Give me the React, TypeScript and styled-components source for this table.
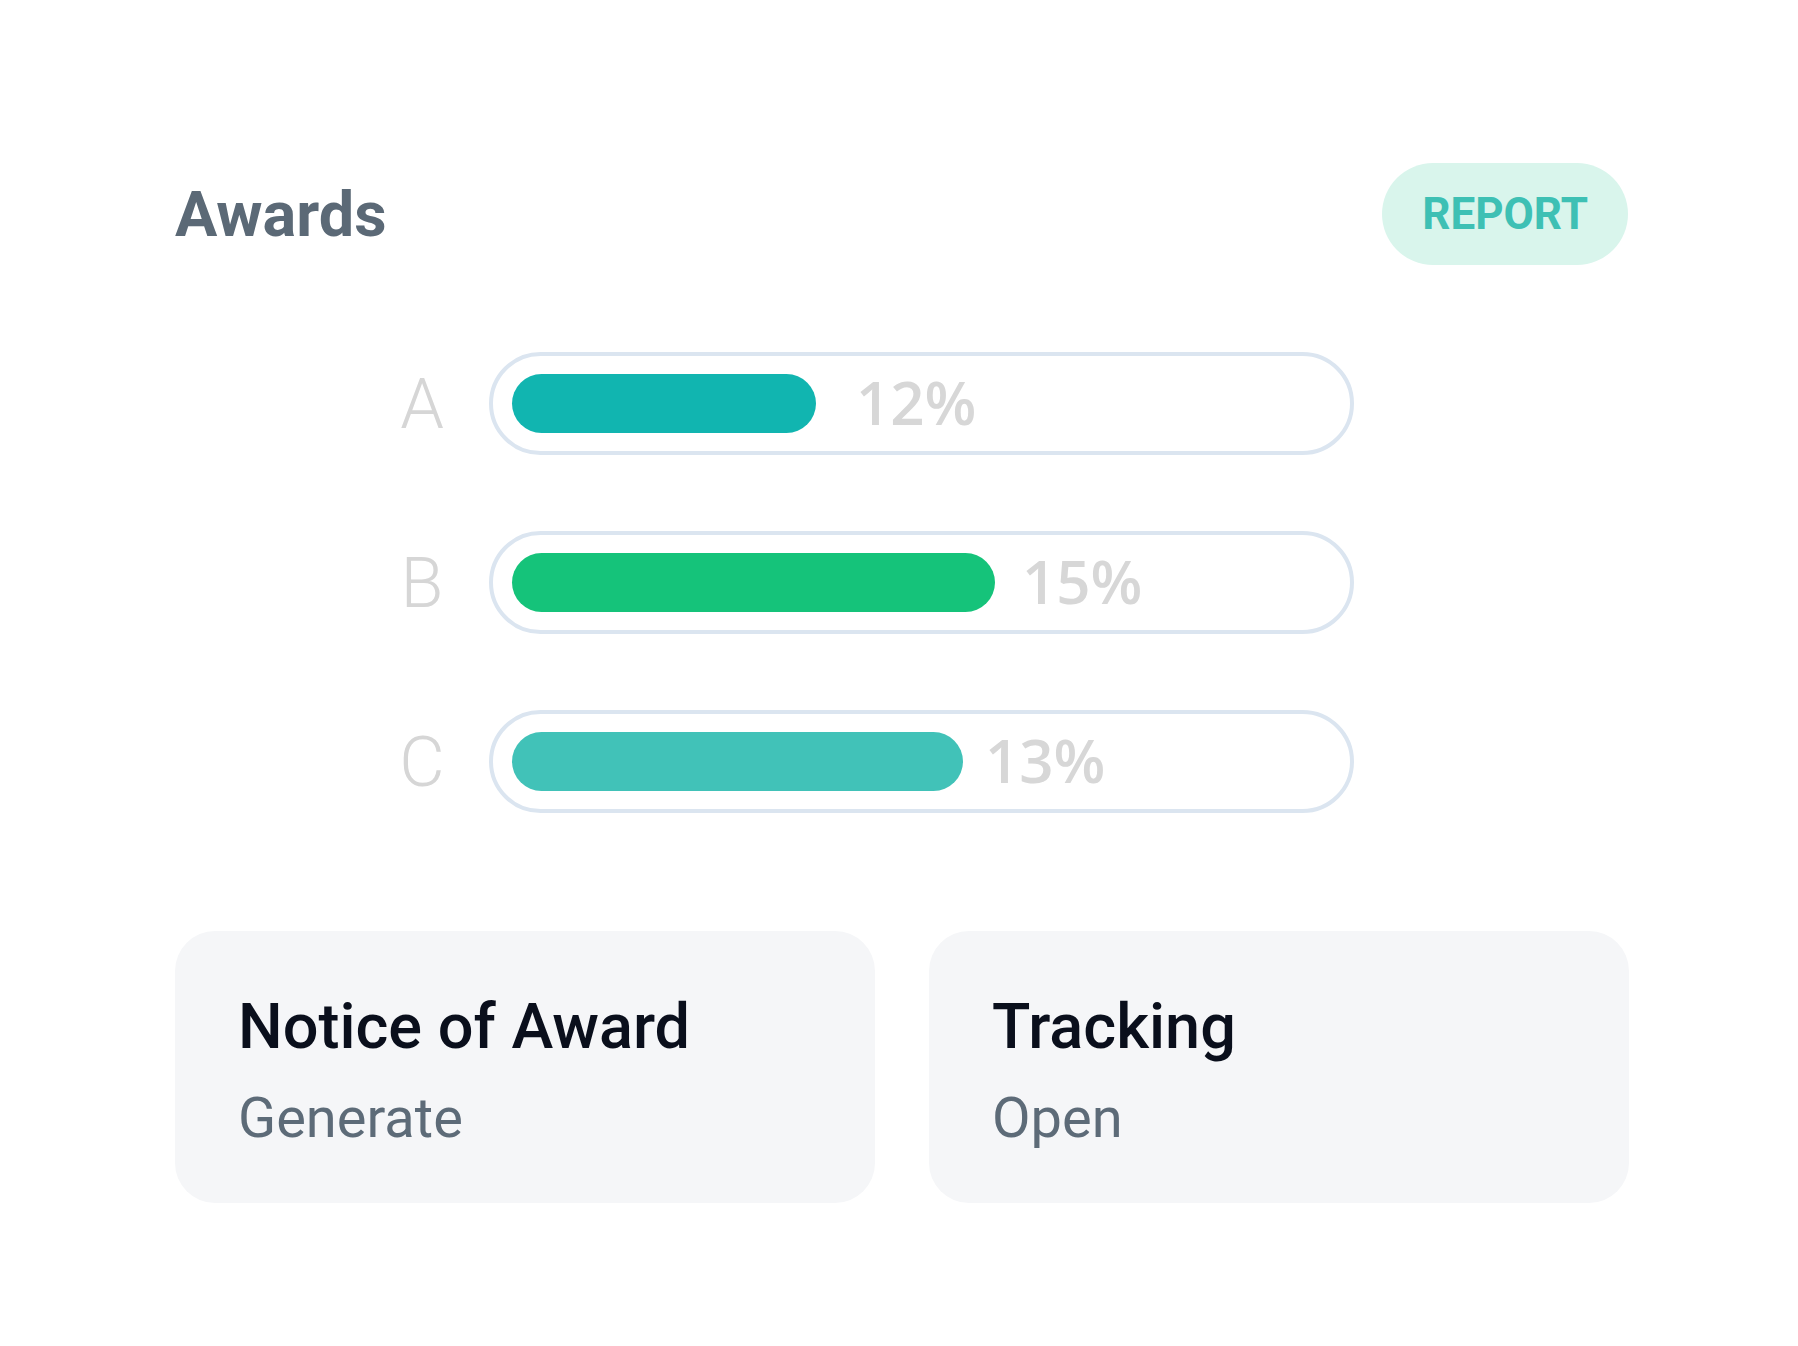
import styled, { createGlobalStyle } from "styled-components";

const GlobalStyle = createGlobalStyle`
  html, body {
    margin: 0;
    padding: 0;
    background: #ffffff;
  }
  body {
    font-family: Roboto, "Liberation Sans", sans-serif;
  }
`;

const Page = styled.div`
  width: 1453px;
  padding: 163px 0 120px 175px;
`;

const Header = styled.div`
  display: flex;
  align-items: center;
  justify-content: space-between;
`;

const Title = styled.h1`
  margin: 0;
  font-family: Roboto, "Liberation Sans", sans-serif;
  font-size: 63px;
  line-height: 1;
  font-weight: 700;
  color: #5b6976;
`;

const ReportButton = styled.button`
  height: 102px;
  padding: 0 40px;
  border: none;
  border-radius: 51px;
  background: #d9f5ec;
  color: #3ec0b4;
  font-family: Roboto, "Liberation Sans", sans-serif;
  font-size: 44px;
  font-weight: 700;
  line-height: 1;
  cursor: pointer;
`;

const Bars = styled.div`
  display: flex;
  flex-direction: column;
  gap: 76px;
  margin-top: 87px;
  padding-left: 217px;
`;

const BarRow = styled.div`
  display: flex;
  align-items: center;
  gap: 37px;
`;

const Letter = styled.span`
  width: 60px;
  text-align: center;
  font-family: Roboto, "Liberation Sans", sans-serif;
  font-size: 70px;
  font-weight: 300;
  line-height: 1;
  color: #d6d6d6;
`;

const Track = styled.div`
  box-sizing: border-box;
  display: flex;
  align-items: center;
  width: 865px;
  height: 103px;
  padding: 0 19px;
  border: 4px solid #dbe5f0;
  border-radius: 52px;
`;

const Fill = styled.div<{ $color: string }>`
  height: 59px;
  border-radius: 30px;
  background: ${(p) => p.$color};
  flex-shrink: 0;
`;

const Percent = styled.span`
  margin-top: -3px;
  font-family: "Open Sans", "Liberation Sans", sans-serif;
  font-size: 60px;
  font-weight: 600;
  line-height: 1;
  color: #d7d7d7;
`;

const Cards = styled.div`
  display: grid;
  grid-template-columns: 700px 700px;
  gap: 54px;
  margin-top: 118px;
`;

const Card = styled.div`
  box-sizing: border-box;
  height: 272px;
  padding: 64px 60px 0 63px;
  border-radius: 40px;
  background: #f5f6f8;
`;

const CardTitle = styled.div`
  font-family: Roboto, "Liberation Sans", sans-serif;
  font-size: 63px;
  font-weight: 500;
  line-height: 1;
  color: #0a0f1c;
`;

const CardAction = styled.div`
  margin-top: 32px;
  font-family: Roboto, "Liberation Sans", sans-serif;
  font-size: 56px;
  font-weight: 400;
  line-height: 1;
  color: #5d6b78;
`;

const bars = [
  { label: "A", value: "12%", width: 304, gap: 40, color: "#11b5b0" },
  { label: "B", value: "15%", width: 483, gap: 27, color: "#15c37a" },
  { label: "C", value: "13%", width: 451, gap: 22, color: "#41c2b8" },
];

const cards = [
  { title: "Notice of Award", action: "Generate" },
  { title: "Tracking", action: "Open" },
];

export default function App() {
  return (
    <>
      <GlobalStyle />
      <Page>
        <Header>
          <Title>Awards</Title>
          <ReportButton>REPORT</ReportButton>
        </Header>
        <Bars>
          {bars.map((bar) => (
            <BarRow key={bar.label}>
              <Letter>{bar.label}</Letter>
              <Track>
                <Fill $color={bar.color} style={{ width: bar.width, marginRight: bar.gap }} />
                <Percent>{bar.value}</Percent>
              </Track>
            </BarRow>
          ))}
        </Bars>
        <Cards>
          {cards.map((card) => (
            <Card key={card.title}>
              <CardTitle>{card.title}</CardTitle>
              <CardAction>{card.action}</CardAction>
            </Card>
          ))}
        </Cards>
      </Page>
    </>
  );
}
